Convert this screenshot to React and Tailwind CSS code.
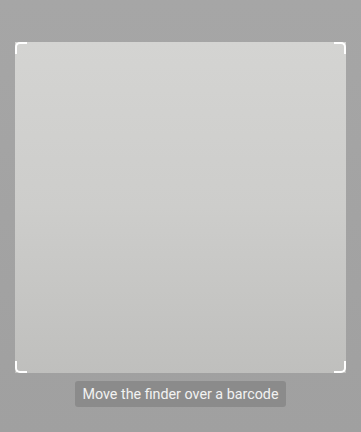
export default function App() {
  const corner = "absolute w-[12px] h-[12px] border-white";
  return (
    <div className="w-[361px] h-[432px] overflow-hidden bg-gradient-to-b from-[#a6a6a6] to-[#a0a0a0] flex flex-col items-center pt-[42px]" style={{ fontFamily: "Roboto, 'Liberation Sans', sans-serif" }}>
      <div className="relative w-[331px] h-[331px] bg-gradient-to-b from-[#d4d4d2] via-[#cdcdcb] to-[#bfbfbd]">
        <div className={`${corner} left-0 top-0 border-l-2 border-t-2 rounded-tl-[5px]`} />
        <div className={`${corner} right-0 top-0 border-r-2 border-t-2 rounded-tr-[5px]`} />
        <div className={`${corner} left-0 bottom-0 border-l-2 border-b-2 rounded-bl-[5px]`} />
        <div className={`${corner} right-0 bottom-0 border-r-2 border-b-2 rounded-br-[5px]`} />
      </div>
      <div className="mt-[8px] h-[26px] px-[7px] flex items-center rounded-[3px] bg-[#8b8b8b] text-[#f2f2f2] text-[14.3px] leading-none">
        Move the finder over a barcode
      </div>
    </div>
  );
}
